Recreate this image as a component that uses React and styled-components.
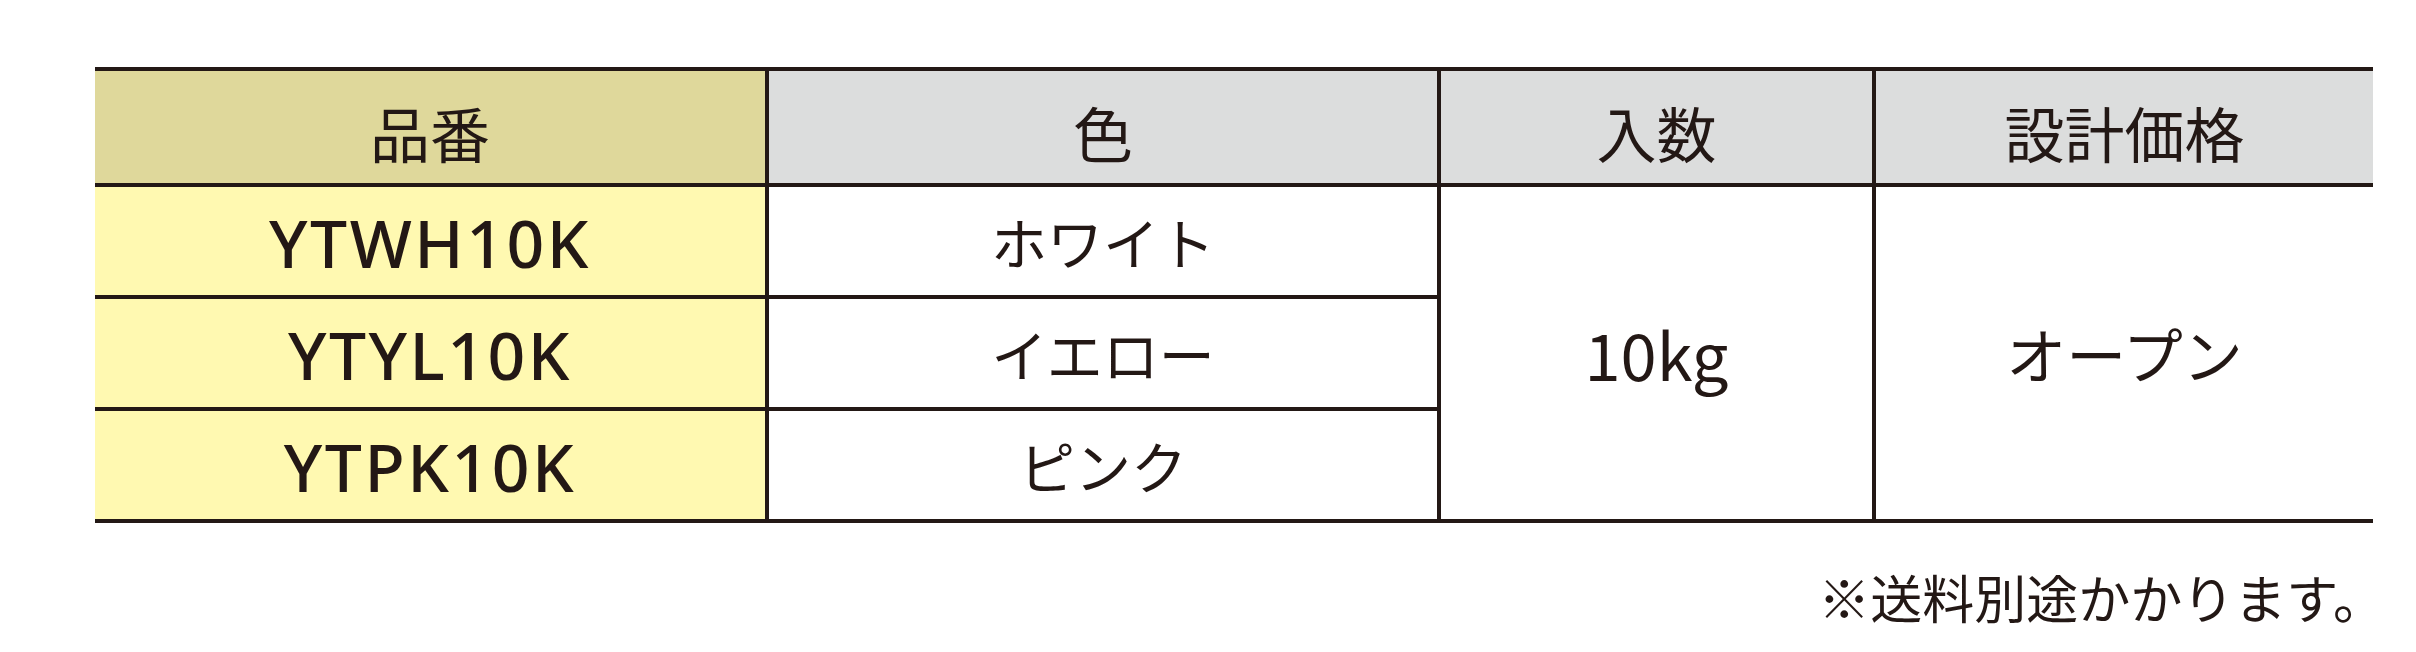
import React from "react";
import styled, { createGlobalStyle } from "styled-components";

const Global = createGlobalStyle`
  html, body {
    margin: 0;
    padding: 0;
    background: #ffffff;
  }
  body {
    width: 2416px;
    height: 652px;
    overflow: hidden;
    font-family: "Noto Sans CJK JP", "Noto Sans", sans-serif;
    color: #231815;
  }
`;

const Page = styled.div`
  padding: 67px 0 0 95px;
  width: 2278px;
`;

const Table = styled.div`
  display: grid;
  grid-template-columns: 670px 668px 431px 497px;
  grid-template-rows: 112px 108px 108px 108px;
  column-gap: 4px;
  row-gap: 4px;
  padding: 4px 0 4px 0;
  background: #231815;
`;

const Cell = styled.div`
  display: flex;
  align-items: center;
  justify-content: center;
  background: ${(p) => p.$bg || "#ffffff"};
  grid-row: ${(p) => (p.$span ? `span ${p.$span}` : "auto")};
  font-family: "Noto Sans CJK JP", sans-serif;
  font-size: ${(p) => p.$size || 56}px;
  font-weight: 400;
  line-height: 1;
  color: #231815;
  white-space: nowrap;
`;

const Head = styled(Cell)`
  font-size: 60px;
  padding-top: 10px;
  box-sizing: border-box;
`;

const Model = styled(Cell)`
  font-family: "Noto Sans", "Noto Sans CJK JP", sans-serif;
  font-size: 66px;
  font-weight: 500;
  letter-spacing: 2.5px;
  padding-top: 2px;
  box-sizing: border-box;
`;

const Note = styled.div`
  margin-top: 48px;
  margin-right: -12px;
  text-align: right;
  font-family: "Noto Sans CJK JP", sans-serif;
  font-size: 52px;
  line-height: 1;
  color: #231815;
`;

const rows = [
  { code: "YTWH10K", color: "ホワイト" },
  { code: "YTYL10K", color: "イエロー" },
  { code: "YTPK10K", color: "ピンク" },
];

export default function App() {
  return (
    <>
      <Global />
      <Page>
        <Table>
          <Head $bg="#dfd89b">品番</Head>
          <Head $bg="#dcdddd">色</Head>
          <Head $bg="#dcdddd">入数</Head>
          <Head $bg="#dcdddd">設計価格</Head>
          {rows.map((r, i) => (
            <React.Fragment key={r.code}>
              <Model $bg="#fff9b1">{r.code}</Model>
              <Cell>{r.color}</Cell>
              {i === 0 && (
                <>
                  <Cell $span={3} $size={65}>10kg</Cell>
                  <Cell $span={3} $size={60}>オープン</Cell>
                </>
              )}
            </React.Fragment>
          ))}
        </Table>
        <Note>※送料別途かかります。</Note>
      </Page>
    </>
  );
}
